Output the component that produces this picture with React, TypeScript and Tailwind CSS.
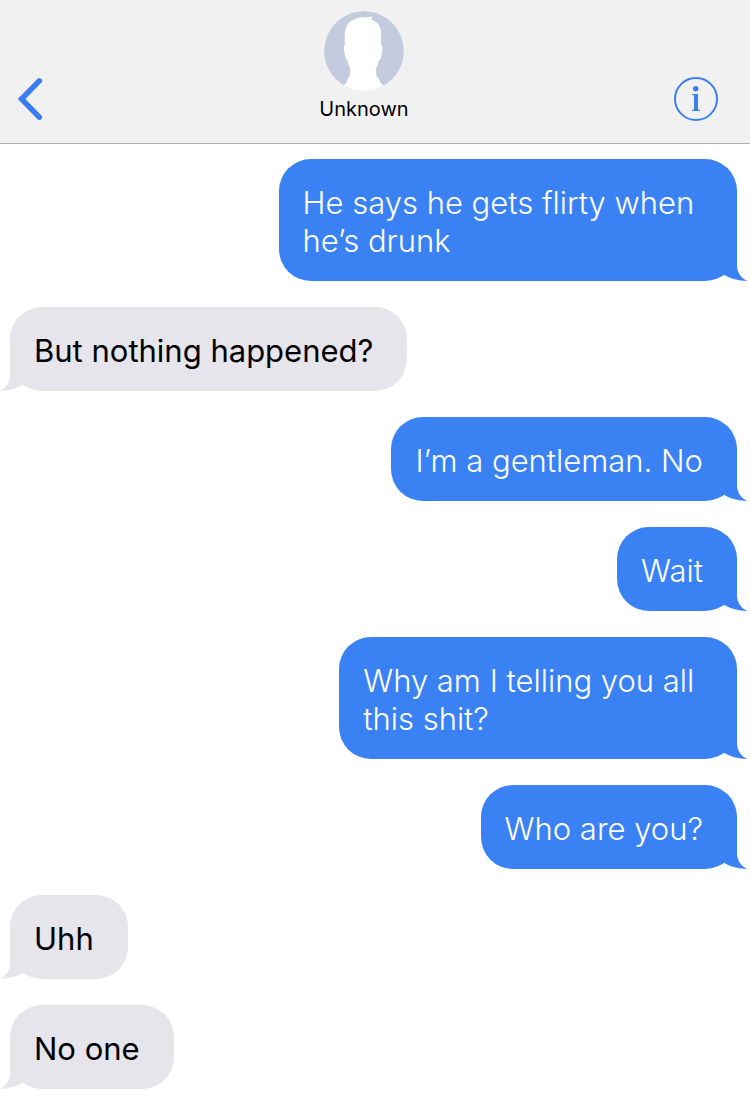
import React from 'react';

type Message = {
  from: 'me' | 'them';
  text: string;
};

const messages: Message[] = [
  { from: 'me', text: 'He says he gets flirty when \nhe’s drunk' },
  { from: 'them', text: 'But nothing happened?' },
  { from: 'me', text: 'I’m a gentleman. No' },
  { from: 'me', text: 'Wait' },
  { from: 'me', text: 'Why am I telling you all \nthis shit?' },
  { from: 'me', text: 'Who are you?' },
  { from: 'them', text: 'Uhh' },
  { from: 'them', text: 'No one' }
];

const Avatar = () => (
  <svg viewBox="0 0 80 80" className="w-20 h-20 rounded-full" aria-hidden="true">
    <circle cx="40" cy="40" r="40" fill="#c4cbdf" />
    <path
      d="M21 34 C20.500 28 20.500 21 22 17 C23.500 11.500 29 8 36 6.600 C40 5.800 44.500 6.800 48.700 5.500 C47.300 6.500 47 8 48 9 C52.500 10.500 56.300 14 56.800 19 C57.300 24 57 30 57 34 C58.800 34.500 58.500 39 57.800 43 C57.200 46.500 56.500 49 54.800 49.500 C54.300 53 53 55.500 52 58 L52.300 65 C54.500 65.500 54.500 67.500 55.500 70 C57 73 58.500 74 61 75 L56 80 H24 L18 75 C20.500 74 22 73 23 70 C24 67.500 23.800 65.500 26 65 L26.300 58 C25 55.500 24.200 53 23.700 49.500 C22 49 21.500 46.500 20.800 43 C20 39 19.300 34.500 21 34 Z"
      fill="#fff"
    />
  </svg>
);

const Bubble = ({ from, text }: Message) => {
  const mine = from === 'me';

  return (
    <li className={mine ? 'flex justify-end pr-[13px]' : 'flex justify-start pl-[10px]'}>
      <div
        className={
          mine
            ? 'relative max-w-[65%] rounded-[32px] bg-[#3a82f4] text-white font-light pt-[25px] pb-[21px] pl-6 pr-[34px]'
            : 'relative max-w-[65%] rounded-[32px] bg-[#e6e5eb] text-black pt-[25px] pb-[21px] pl-6 pr-[34px]'
        }
      >
        {/* Tail */}
        <svg
          viewBox="0 0 44 34"
          aria-hidden="true"
          className={
            mine
              ? 'absolute bottom-0 -right-[11px] w-[44px] h-[34px] text-[#3a82f4]'
              : 'absolute bottom-0 -left-[11px] w-[44px] h-[34px] text-[#e6e5eb] -scale-x-100'
          }
        >
          <path d="M0 0 H33 V18 C33 25 36.500 31 43.500 34 C34 33.500 26 31.500 20 27.700 L0 20 Z" fill="currentColor" />
        </svg>
        <p className="relative whitespace-pre-wrap text-[31px] leading-[38px]">{text}</p>
      </div>
    </li>
  );
};

const App = () => {
  return (
    <div className="min-h-screen bg-white font-['Inter','Liberation_Sans',sans-serif]">
      {/* Header */}
      <header className="flex items-end justify-between bg-[#f1f1f1] border-b border-[#b2b2b2] pt-[11px] pb-[22px] pl-[18px] pr-8">
        <button type="button" aria-label="Back" className="w-9 h-11 flex items-center">
          <svg viewBox="0 0 36 44" className="w-9 h-11" fill="none">
            <path d="M21.300 3.800 L3.500 22 L21.300 40.200" stroke="#3a7df0" strokeWidth="5.500" strokeLinecap="round" />
          </svg>
        </button>

        <div className="flex flex-col items-center gap-1.5">
          <Avatar />
          <h1 className="text-[20px] leading-6 text-black">Unknown</h1>
        </div>

        <button type="button" aria-label="Details" className="w-11 h-11">
          <svg viewBox="0 0 44 44" className="w-11 h-11" fill="#3a7df0">
            <circle cx="22" cy="22" r="21" fill="none" stroke="#3a7df0" strokeWidth="2" />
            <circle cx="21.700" cy="11.800" r="2.700" />
            <path d="M18 17 H24 V32.500 L26 33 V34 H18 V33 L20 32.500 V18.300 L18 18 Z" />
          </svg>
        </button>
      </header>

      {/* Conversation */}
      <main>
        <ul className="flex flex-col gap-[26px] pt-[15px] pb-5">
          {messages.map((message, index) => (
            <Bubble key={index} from={message.from} text={message.text} />
          ))}
        </ul>
      </main>
    </div>
  );
};

export default App;
